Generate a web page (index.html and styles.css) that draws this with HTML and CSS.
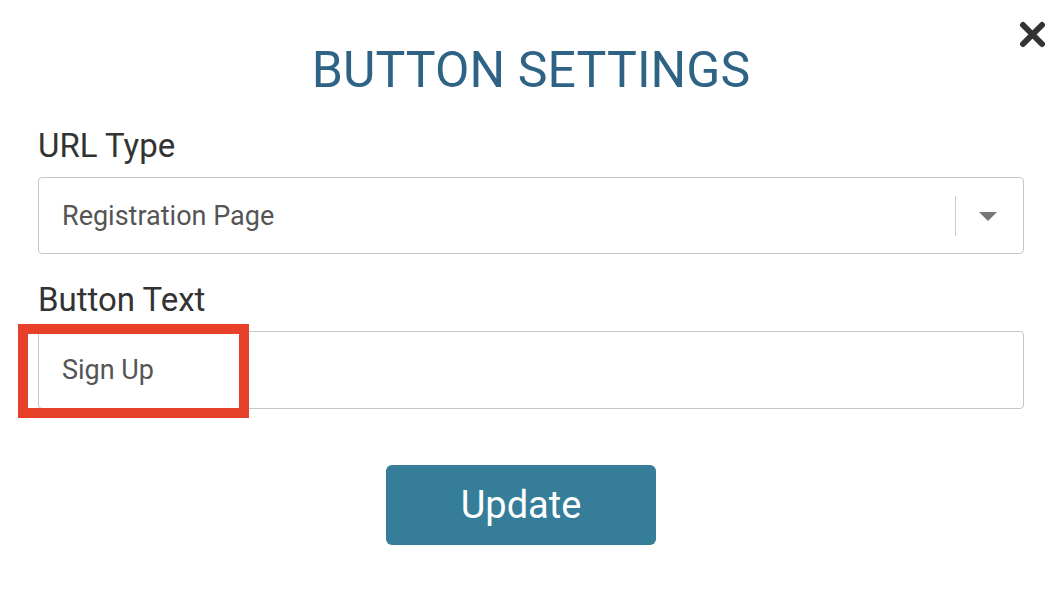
FILE: index.html
```html
<!DOCTYPE html>
<html lang="en">
<head>
    <meta charset="UTF-8" />
    <meta name="viewport" content="width=device-width, initial-scale=1.0"/>
    <title>Button Settings</title>
    <link rel="stylesheet" href="styles.css">
</head>
<body>
<div class="modal">
    <button class="close" aria-label="Close">
        <svg width="27" height="27" viewBox="0 0 27 27">
            <path d="M4 4 L23 23 M23 4 L4 23" stroke="#333" stroke-width="6" stroke-linecap="round"/>
        </svg>
    </button>
    <h1 class="title">BUTTON SETTINGS</h1>

    <div class="form-group">
        <label>URL Type</label>
        <div class="select">
            <span class="select-value">Registration Page</span>
            <span class="select-sep"></span>
            <span class="select-arrow"></span>
        </div>
    </div>

    <div class="form-group">
        <label>Button Text</label>
        <div class="input-wrap">
            <input type="text" class="input" value="Sign Up">
            <div class="highlight"></div>
        </div>
    </div>

    <div class="actions">
        <button class="update">Update</button>
    </div>
</div>
</body>
</html>
```

FILE: styles.css
```css
* {
    margin: 0;
    padding: 0;
    box-sizing: border-box;
    font-family: Roboto, "Liberation Sans", sans-serif;
}

body {
    background-color: #fff;
    color: #333;
}

.modal {
    position: relative;
    padding: 40px 40px 0 38px;
}

.close {
    position: absolute;
    top: 21px;
    right: 18px;
    border: none;
    background: none;
    display: flex;
}

.title {
    text-align: center;
    font-size: 50px;
    font-weight: 400;
    letter-spacing: 0.1px;
    color: #2e6385;
    line-height: 60px;
    margin-bottom: 27px;
}

.form-group {
    margin-bottom: 27px;
}

.form-group label {
    display: block;
    font-size: 33px;
    line-height: 38px;
    color: #333;
    margin-bottom: 12px;
}

.select {
    height: 77px;
    border: 1px solid #c6c6c6;
    border-radius: 4px;
    display: flex;
    align-items: center;
    padding-left: 23px;
}

.select-value,
.input {
    font-size: 27px;
    color: #555;
}

.select-value {
    flex: 1;
}

.select-sep {
    width: 1px;
    height: 40px;
    background-color: #ccc;
}

.select-arrow {
    width: 0;
    height: 0;
    border-left: 9px solid transparent;
    border-right: 9px solid transparent;
    border-top: 9px solid #777;
    margin: 2px 26px 0 23px;
}

.input-wrap {
    position: relative;
}

.input {
    width: 100%;
    height: 78px;
    border: 1px solid #c6c6c6;
    border-radius: 4px;
    padding-left: 23px;
    outline: none;
}

.highlight {
    position: absolute;
    left: -20px;
    top: -7px;
    width: 231px;
    height: 94px;
    border: 10px solid #e8412a;
}

.actions {
    display: flex;
    justify-content: center;
    padding-top: 29px;
    padding-right: 20px;
}

.update {
    width: 270px;
    height: 80px;
    border: none;
    border-radius: 6px;
    background-color: #367d99;
    color: #fff;
    font-size: 38px;
}
```
